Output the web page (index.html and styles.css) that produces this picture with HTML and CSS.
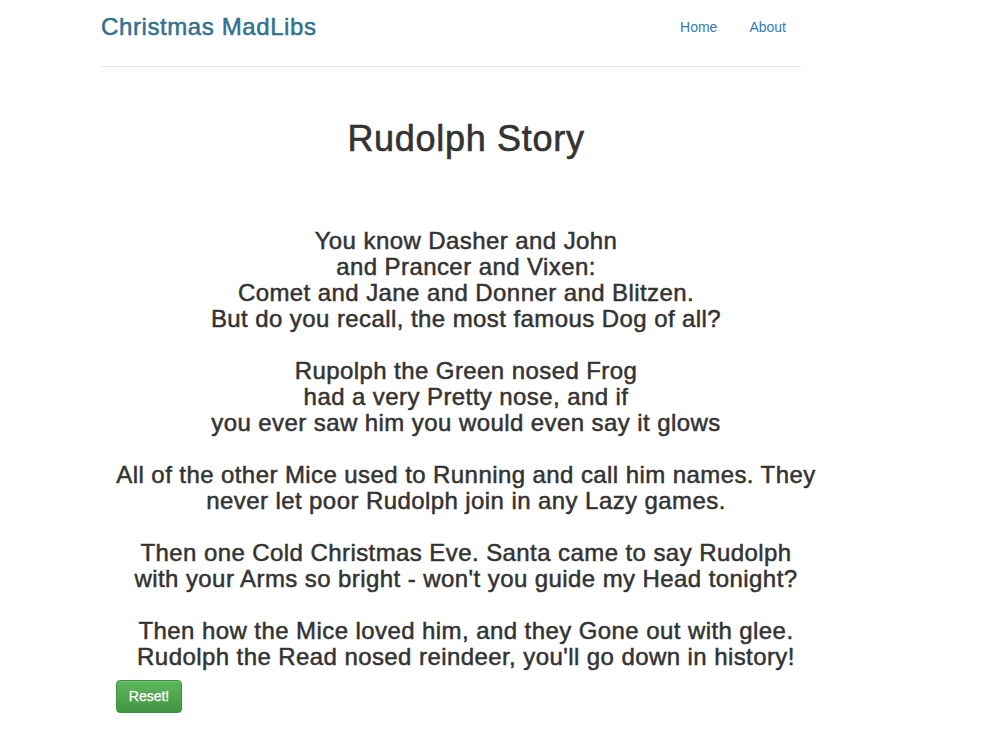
FILE: index.html
```html
<!DOCTYPE html>
<html>
<head>
<meta charset="utf-8">
<title>Christmas MadLibs</title>
<link rel="stylesheet" href="styles.css">
</head>
<body>
<header class="header">
  <h3 class="brand">Christmas MadLibs</h3>
  <nav class="nav">
    <a class="nav-link" href="#">Home</a>
    <a class="nav-link" href="#">About</a>
  </nav>
</header>
<main class="content">
  <h1 class="title">Rudolph Story</h1>
  <h3 class="story">You know Dasher and John<br>and Prancer and Vixen:<br>Comet and Jane and Donner and Blitzen.<br>But do you recall, the most famous Dog of all?<br><br>Rupolph the Green nosed Frog<br>had a very Pretty nose, and if<br>you ever saw him you would even say it glows<br><br>All of the other Mice used to Running and call him names. They never let poor Rudolph join in any Lazy games.<br><br>Then one Cold Christmas Eve. Santa came to say Rudolph<br>with your Arms so bright - won't you guide my Head tonight?<br><br>Then how the Mice loved him, and they Gone out with glee.<br>Rudolph the Read nosed reindeer, you'll go down in history!</h3>
  <button class="btn-reset" type="button">Reset!</button>
</main>
</body>
</html>
```
FILE: styles.css
```css
html, body {
  margin: 0;
  padding: 0;
  background: #fff;
}
body {
  font-family: "Liberation Sans", Arial, sans-serif;
  font-size: 14px;
  line-height: 1.42857;
  color: #333;
}
.header {
  width: 700px;
  margin-left: 101px;
  padding: 7px 0 19px;
  border-bottom: 1px solid #e5e5e5;
  display: flex;
  justify-content: space-between;
  align-items: center;
}
.brand {
  margin: 0;
  font-size: 24px;
  line-height: 40px;
  font-weight: 500;
  letter-spacing: 0.6px;
  color: #31708f;
  -webkit-text-stroke: 0.5px #31708f;
}
.nav {
  display: flex;
  gap: 2px;
}
.nav-link {
  display: block;
  padding: 10px 15px;
  line-height: 20px;
  font-size: 14px;
  color: #337ab7;
  text-decoration: none;
}
.content {
  width: 700px;
  margin-left: 116px;
}
.title {
  margin: 52px 0 0;
  font-size: 36px;
  line-height: 1.1;
  font-weight: 500;
  letter-spacing: 0.7px;
  text-align: center;
  color: #333;
  -webkit-text-stroke: 0.6px #333;
}
.story {
  margin: 69px -6px 10px;
  font-size: 24px;
  line-height: 26px;
  font-weight: 500;
  letter-spacing: 0.42px;
  text-align: center;
  color: #333;
  -webkit-text-stroke: 0.5px #333;
}
.btn-reset {
  display: block;
  width: 66px;
  height: 33px;
  padding: 0;
  font-family: "Liberation Sans", Arial, sans-serif;
  font-size: 14px;
  font-weight: 500;
  color: #fff;
  -webkit-text-stroke: 0.3px #fff;
  background: linear-gradient(to bottom, #5cb85c 0%, #419641 100%);
  border: 1px solid #3e8f3e;
  border-radius: 4px;
  text-shadow: 0 -1px 0 rgba(0,0,0,0.2);
  box-shadow: inset 0 1px 0 rgba(255,255,255,0.15), 0 1px 1px rgba(0,0,0,0.075);
}
```
